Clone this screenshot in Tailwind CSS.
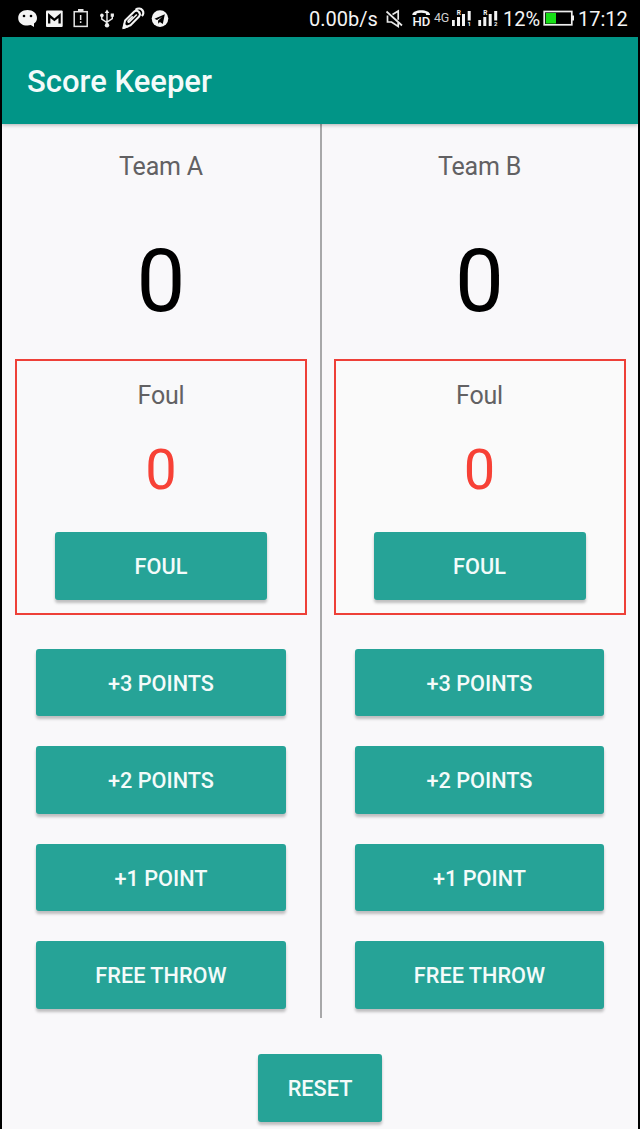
<!DOCTYPE html>
<html lang="en">
<head>
<meta charset="utf-8">
<title>Score Keeper</title>
<script src="https://cdn.jsdelivr.net/npm/@tailwindcss/browser@4"></script>
</head>
<body class="bg-black font-['Roboto',sans-serif]">
<div class="flex h-[1129px] w-[640px] flex-col overflow-hidden">
  <header class="flex h-[37px] shrink-0 items-center justify-between pr-[12px] pl-[17px] text-[20px] leading-none text-[#f4f4f4]">
    <div class="flex items-center">
      <svg class="h-[37px] w-[21px]" viewBox="17 0 21 37"><path fill="#f4f4f4" d="M27.5 10c-5.300 0-9.300 3.200-9.300 7.900 0 4.600 4 7.700 9.300 7.700 1.200 0 2.300-.2 3.300-.5l3.200 2v-3.500c1.900-1.400 3-3.300 3-5.700 0-4.700-4.200-7.900-9.500-7.900z"/><circle cx="24" cy="16" r="1.300"/><circle cx="31" cy="16" r="1.300"/></svg>
      <svg class="ml-[8px] h-[37px] w-[17px]" viewBox="46 0 17 37"><rect x="46" y="10.500" width="16.700" height="16.500" rx="1" fill="#f4f4f4"/><path d="M49.200 23.500V15.500l5.200 4.300 5.200-4.300v8" fill="none" stroke="#000" stroke-width="2.300"/></svg>
      <svg class="ml-[10px] h-[37px] w-[16px]" viewBox="73 0 16 37"><rect x="74.200" y="11.700" width="13" height="14.700" fill="none" stroke="#e4e4e4" stroke-width="1.500"/><path fill="#e4e4e4" d="M78 9h5.500v3H78zM79.900 15h1.500v5h-1.500zM79.900 21.300h1.500V23h-1.500z"/></svg>
      <svg class="ml-[11px] h-[37px] w-[15px]" viewBox="100 0 15 37"><g fill="none" stroke="#eee" stroke-width="1.400"><path d="M107 25V12M101.800 16v3.200l5.200 3.500M112.300 16v2.600l-5.300 3.500"/></g><g fill="#eee"><path d="M107 9.500l2.300 3.600h-4.600zM110.700 13.500h3.200v3.200h-3.200z"/><circle cx="101.900" cy="15.400" r="1.800"/><circle cx="107" cy="25.300" r="2.200"/></g></svg>
      <svg class="ml-[7px] h-[37px] w-[23px]" viewBox="122 0 23 37"><path d="M123.400 28l1.700-7.500 8.900-8.800c1.600-1.600 3.800-1 4.900.3 1.200 1.400 1.500 3.200 0 4.700l-8.400 8.600z" fill="none" stroke="#f4f4f4" stroke-width="2" stroke-linejoin="round"/><path d="M136.800 14.500l-7.300 7.300c-.8.800-1.900.1-1.300-1l4.500-4.600" fill="none" stroke="#f4f4f4" stroke-width="1.600"/><path d="M135.500 9.800c2.700-2 5.500-1.200 6.900.4 1.300 1.600 1.200 4.100-.6 5.800" fill="none" stroke="#f4f4f4" stroke-width="2.300"/><path d="M122.400 29.200l1.500-6.200 4.700 4.200z" fill="#f4f4f4"/></svg>
      <svg class="ml-[6px] h-[37px] w-[18px]" viewBox="151 0 18 37"><circle cx="160" cy="18.600" r="8.300" fill="#f4f4f4"/><path d="M154.500 18.700l10.300-4.400-2 9.700-2.900-2-1.600 1.800-.3-3.100 4.200-4-5.200 3.200z"/></svg>
    </div>
    <div class="flex items-center">
      <span class="w-[76px] whitespace-nowrap">0.00b/s</span>
      <svg class="h-[37px] w-[20px]" viewBox="385 0 20 37"><path d="M387.500 15.500v6.500h4l6.700 4.500v-4M392.500 14.500l5.700-3.500v8.800M386.500 11.500l15.500 14" fill="none" stroke="#e8e8e8" stroke-width="1.700"/></svg>
      <svg class="ml-[6px] h-[37px] w-[21px]" viewBox="411 0 21 37"><path d="M412.300 15c0-6.300 17.800-6.300 17.800 0l-3.900-.1-.6-1.600c-2.800-.8-6-.8-8.800 0l-.6 1.600z" fill="#f4f4f4"/><text x="412.500" y="26.400" textLength="17.800" lengthAdjust="spacingAndGlyphs" font-size="13.500" font-weight="500" fill="#f4f4f4">HD</text></svg>
      <span class="ml-[2px] w-[17px] text-[12.500px] tracking-[-0.300px] text-[#cfcfcf]">4G</span>
      <svg class="h-[37px] w-[21px]" viewBox="451 0 21 37"><g fill="#f4f4f4"><path d="M452 20h2.800v6H452zM457 17h3v9h-3zM462 14h3v12h-3zM467.700 11h3v9.500h-3z"/><text x="456.800" y="15.200" font-size="6.500" font-weight="700">R</text><text x="467.500" y="26" font-size="6" font-weight="700">1</text></g></svg>
      <svg class="ml-[6px] h-[37px] w-[21px]" viewBox="478 0 21 37"><g fill="#f4f4f4"><path d="M478.300 20h2.800v6h-2.800zM483.300 17h3v9h-3zM488.700 14h3v12h-3zM494.200 11h3v9.500h-3z"/><text x="483.300" y="15.200" font-size="6.500" font-weight="700">R</text><text x="494" y="26" font-size="6" font-weight="700">2</text></g></svg>
      <span class="ml-[4px] w-[39px]">12%</span>
      <svg class="h-[37px] w-[33px]" viewBox="542 0 33 37"><rect x="544.200" y="11.500" width="27.600" height="13.300" fill="none" stroke="#eee" stroke-width="1.700"/><path fill="#eee" d="M572 15.500h2v5h-2z"/><path fill="#17df17" d="M545.800 13h10.200v10.500h-10.200z"/></svg>
      <span class="ml-[3px] w-[50px]">17:12</span>
    </div>
  </header>

  <div class="mr-[2px] ml-[2px] flex h-[1092px] flex-col bg-[#f9f8fa]">
    <div class="z-10 flex h-[86.500px] shrink-0 items-center bg-[#019587] pl-[25px] shadow-[0_1px_4px_rgba(0,0,0,0.3)]">
      <h1 class="pt-[2px] text-[31px] leading-none font-medium text-[#f4fbfa]">Score Keeper</h1>
    </div>

    <main class="flex h-[894.500px] shrink-0">
      <section class="flex w-[318px] flex-col items-center">
        <h2 class="mt-[28px] h-[30px] text-[25px] leading-[30px] tracking-[-0.200px] text-[#626163]">Team A</h2>
        <div class="mt-[49px] h-[100px] text-[87px] leading-[100px] text-black">0</div>
        <div class="mt-[28px] flex h-[256px] w-[292px] flex-col items-center border-2 border-[#ee4038] bg-[#f9f9fa]">
          <h3 class="mt-[20px] h-[30px] text-[25px] leading-[30px] tracking-[-0.200px] text-[#626163]">Foul</h3>
          <div class="mt-[29px] h-[60px] text-[56px] leading-[60px] text-[#f74136]">0</div>
          <button class="mt-[32px] h-[68px] w-[212px] rounded-[3px] bg-[#26a397] pt-[4px] text-[21.700px] font-medium text-[#f4fbfa] shadow-[0_3px_3px_rgba(0,0,0,0.24)]">FOUL</button>
        </div>
        <div class="mt-[34px] flex w-[250px] flex-col gap-[30px]">
          <button class="h-[67.500px] rounded-[3px] bg-[#26a397] pt-[4px] text-[21.700px] font-medium text-[#f4fbfa] shadow-[0_3px_3px_rgba(0,0,0,0.24)]">+3 POINTS</button>
          <button class="h-[67.500px] rounded-[3px] bg-[#26a397] pt-[4px] text-[21.700px] font-medium text-[#f4fbfa] shadow-[0_3px_3px_rgba(0,0,0,0.24)]">+2 POINTS</button>
          <button class="h-[67.500px] rounded-[3px] bg-[#26a397] pt-[4px] text-[21.700px] font-medium text-[#f4fbfa] shadow-[0_3px_3px_rgba(0,0,0,0.24)]">+1 POINT</button>
          <button class="h-[67.500px] rounded-[3px] bg-[#26a397] pt-[4px] text-[21.700px] font-medium text-[#f4fbfa] shadow-[0_3px_3px_rgba(0,0,0,0.24)]">FREE THROW</button>
        </div>
      </section>
      <div class="w-[1.500px] bg-[#a8a8a9]"></div>
      <section class="flex w-[316px] flex-col items-center">
        <h2 class="mt-[28px] h-[30px] text-[25px] leading-[30px] tracking-[-0.200px] text-[#626163]">Team B</h2>
        <div class="mt-[49px] h-[100px] text-[87px] leading-[100px] text-black">0</div>
        <div class="mt-[28px] flex h-[256px] w-[292px] flex-col items-center border-2 border-[#ee4038] bg-[#fafafa]">
          <h3 class="mt-[20px] h-[30px] text-[25px] leading-[30px] tracking-[-0.200px] text-[#626163]">Foul</h3>
          <div class="mt-[29px] h-[60px] text-[56px] leading-[60px] text-[#f74136]">0</div>
          <button class="mt-[32px] h-[68px] w-[212px] rounded-[3px] bg-[#26a397] pt-[4px] text-[21.700px] font-medium text-[#f4fbfa] shadow-[0_3px_3px_rgba(0,0,0,0.24)]">FOUL</button>
        </div>
        <div class="mt-[34px] flex w-[249.500px] flex-col gap-[30px]">
          <button class="h-[67.500px] rounded-[3px] bg-[#26a397] pt-[4px] text-[21.700px] font-medium text-[#f4fbfa] shadow-[0_3px_3px_rgba(0,0,0,0.24)]">+3 POINTS</button>
          <button class="h-[67.500px] rounded-[3px] bg-[#26a397] pt-[4px] text-[21.700px] font-medium text-[#f4fbfa] shadow-[0_3px_3px_rgba(0,0,0,0.24)]">+2 POINTS</button>
          <button class="h-[67.500px] rounded-[3px] bg-[#26a397] pt-[4px] text-[21.700px] font-medium text-[#f4fbfa] shadow-[0_3px_3px_rgba(0,0,0,0.24)]">+1 POINT</button>
          <button class="h-[67.500px] rounded-[3px] bg-[#26a397] pt-[4px] text-[21.700px] font-medium text-[#f4fbfa] shadow-[0_3px_3px_rgba(0,0,0,0.24)]">FREE THROW</button>
        </div>
      </section>
    </main>

    <div class="flex justify-center pt-[36px]">
      <button class="h-[68px] w-[124px] rounded-[3px] bg-[#26a397] pt-[3px] text-[21.700px] font-medium text-[#f4fbfa] shadow-[0_3px_3px_rgba(0,0,0,0.24)]">RESET</button>
    </div>
  </div>
</div>
</body>
</html>
